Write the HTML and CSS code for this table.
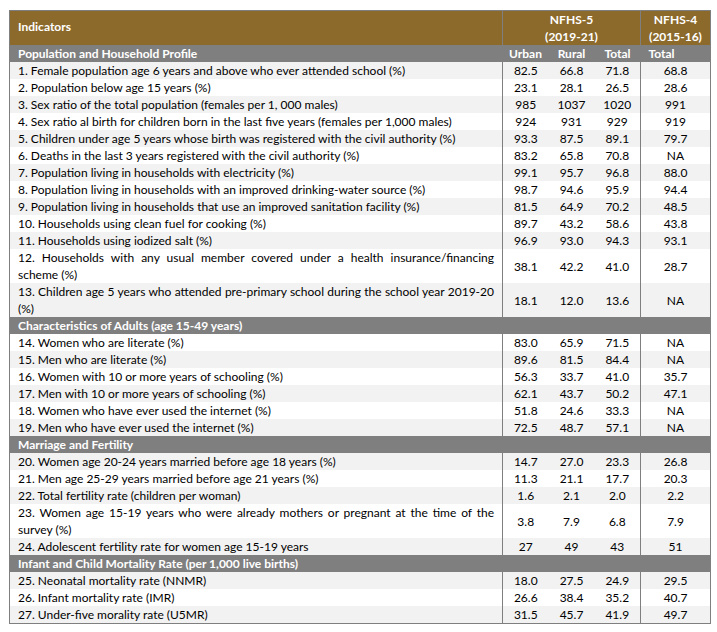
FILE: index.html
```html
<!DOCTYPE html>
<html>
<head>
<meta charset="utf-8">
<link rel="stylesheet" href="styles.css">
</head>
<body>
<table class="tbl">
  <colgroup>
    <col class="c-ind"><col class="c-num"><col class="c-num"><col class="c-num"><col class="c-last">
  </colgroup>
  <thead>
    <tr class="hd">
      <th class="hd-ind">Indicators</th>
      <th class="hd-grp" colspan="3">NFHS-5<br>(2019-21)</th>
      <th class="hd-grp4">NFHS-4<br>(2015-16)</th>
    </tr>
  </thead>
  <tbody>
    <tr class="sec"><td>Population and Household Profile</td><td class="sub">Urban</td><td class="sub">Rural</td><td class="sub">Total</td><td class="sub sub-l">Total</td></tr>
    <tr class="g"><td class="ind">1. Female population age 6 years and above who ever attended school (%)</td><td>82.5</td><td>66.8</td><td>71.8</td><td class="l">68.8</td></tr>
    <tr><td class="ind">2. Population below age 15 years (%)</td><td>23.1</td><td>28.1</td><td>26.5</td><td class="l">28.6</td></tr>
    <tr class="g"><td class="ind">3. Sex ratio of the total population (females per 1, 000 males)</td><td>985</td><td>1037</td><td>1020</td><td class="l">991</td></tr>
    <tr><td class="ind">4. Sex ratio al birth for children born in the last five years (females per 1,000 males)</td><td>924</td><td>931</td><td>929</td><td class="l">919</td></tr>
    <tr class="g"><td class="ind">5. Children under age 5 years whose birth was registered with the civil authority (%)</td><td>93.3</td><td>87.5</td><td>89.1</td><td class="l">79.7</td></tr>
    <tr><td class="ind">6. Deaths in the last 3 years registered with the civil authority (%)</td><td>83.2</td><td>65.8</td><td>70.8</td><td class="l">NA</td></tr>
    <tr class="g"><td class="ind">7. Population living in households with electricity (%)</td><td>99.1</td><td>95.7</td><td>96.8</td><td class="l">88.0</td></tr>
    <tr><td class="ind">8. Population living in households with an improved drinking-water source (%)</td><td>98.7</td><td>94.6</td><td>95.9</td><td class="l">94.4</td></tr>
    <tr class="g"><td class="ind">9. Population living in households that use an improved sanitation facility (%)</td><td>81.5</td><td>64.9</td><td>70.2</td><td class="l">48.5</td></tr>
    <tr><td class="ind">10. Households using clean fuel for cooking (%)</td><td>89.7</td><td>43.2</td><td>58.6</td><td class="l">43.8</td></tr>
    <tr class="g"><td class="ind">11. Households using iodized salt (%)</td><td>96.9</td><td>93.0</td><td>94.3</td><td class="l">93.1</td></tr>
    <tr><td class="ind just">12. Households with any usual member covered under a health insurance/financing scheme (%)</td><td>38.1</td><td>42.2</td><td>41.0</td><td class="l">28.7</td></tr>
    <tr class="g"><td class="ind just">13. Children age 5 years who attended pre-primary school during the school year 2019-20 (%)</td><td>18.1</td><td>12.0</td><td>13.6</td><td class="l">NA</td></tr>
    <tr class="sec"><td colspan="5">Characteristics of Adults (age 15-49 years)</td></tr>
    <tr><td class="ind">14. Women who are literate (%)</td><td>83.0</td><td>65.9</td><td>71.5</td><td class="l">NA</td></tr>
    <tr class="g"><td class="ind">15. Men who are literate (%)</td><td>89.6</td><td>81.5</td><td>84.4</td><td class="l">NA</td></tr>
    <tr><td class="ind">16. Women with 10 or more years of schooling (%)</td><td>56.3</td><td>33.7</td><td>41.0</td><td class="l">35.7</td></tr>
    <tr class="g"><td class="ind">17. Men with 10 or more years of schooling (%)</td><td>62.1</td><td>43.7</td><td>50.2</td><td class="l">47.1</td></tr>
    <tr><td class="ind">18. Women who have ever used the internet (%)</td><td>51.8</td><td>24.6</td><td>33.3</td><td class="l">NA</td></tr>
    <tr class="g"><td class="ind">19. Men who have ever used the internet (%)</td><td>72.5</td><td>48.7</td><td>57.1</td><td class="l">NA</td></tr>
    <tr class="sec"><td colspan="5">Marriage and Fertility</td></tr>
    <tr class="g"><td class="ind">20. Women age 20-24 years married before age 18 years (%)</td><td>14.7</td><td>27.0</td><td>23.3</td><td class="l">26.8</td></tr>
    <tr><td class="ind">21. Men age 25-29 years married before age 21 years (%)</td><td>11.3</td><td>21.1</td><td>17.7</td><td class="l">20.3</td></tr>
    <tr class="g"><td class="ind">22. Total fertility rate (children per woman)</td><td>1.6</td><td>2.1</td><td>2.0</td><td class="l">2.2</td></tr>
    <tr><td class="ind just">23. Women age 15-19 years who were already mothers or pregnant at the time of the survey (%)</td><td>3.8</td><td>7.9</td><td>6.8</td><td class="l">7.9</td></tr>
    <tr class="g"><td class="ind">24. Adolescent fertility rate for women age 15-19 years</td><td>27</td><td>49</td><td>43</td><td class="l">51</td></tr>
    <tr class="sec"><td colspan="5">Infant and Child Mortality Rate (per 1,000 live births)</td></tr>
    <tr class="g"><td class="ind">25. Neonatal mortality rate (NNMR)</td><td>18.0</td><td>27.5</td><td>24.9</td><td class="l">29.5</td></tr>
    <tr><td class="ind">26. Infant mortality rate (IMR)</td><td>26.6</td><td>38.4</td><td>35.2</td><td class="l">40.7</td></tr>
    <tr class="g"><td class="ind">27. Under-five morality rate (U5MR)</td><td>31.5</td><td>45.7</td><td>41.9</td><td class="l">49.7</td></tr>
  </tbody>
</table>
</body>
</html>
```
FILE: styles.css
```css
html, body {
  margin: 0;
  padding: 0;
  background: #ffffff;
}
body {
  padding: 10px 0 0 9px;
  font-family: "Lato", "Open Sans", sans-serif;
  font-size: 12px;
  color: #000000;
}
.tbl {
  border-collapse: collapse;
  table-layout: fixed;
  width: 701px;
  border: 1px solid #7f7f7f;
}
.c-ind { width: 493px; }
.c-num { width: 46px; }
.c-last { width: 70px; }
.tbl th, .tbl td {
  padding: 0;
  line-height: 17px;
  height: 17px;
  vertical-align: middle;
}
.hd th {
  background: #8c6a2c;
  color: #ffffff;
  font-weight: bold;
  text-align: center;
  border-left: 1px solid #7f7f7f;
}
.hd .hd-ind {
  text-align: left;
  padding-left: 8px;
  padding-bottom: 4px;
  border-left: none;
}
.sec td {
  background: #7f7f7f;
  color: #ffffff;
  font-weight: bold;
  padding-left: 8px;
  height: 17px;
}
.sec td.sub {
  padding-left: 0;
  text-align: center;
}
.sec td.sub-l {
  text-align: left;
  padding-left: 8px;
}
.tbl tbody tr td {
  text-align: center;
}
.tbl tbody tr.sec td:first-child {
  text-align: left;
}
.tbl tbody tr td.ind {
  text-align: left;
  padding-left: 8px;
  padding-right: 8px;
  border-right: 1px solid #7f7f7f;
}
.tbl tbody tr td.just {
  text-align: justify;
}
.tbl tbody tr td.l {
  border-left: 1px solid #7f7f7f;
}
.tbl tbody tr.g td {
  background: #f2f2f2;
}
```
